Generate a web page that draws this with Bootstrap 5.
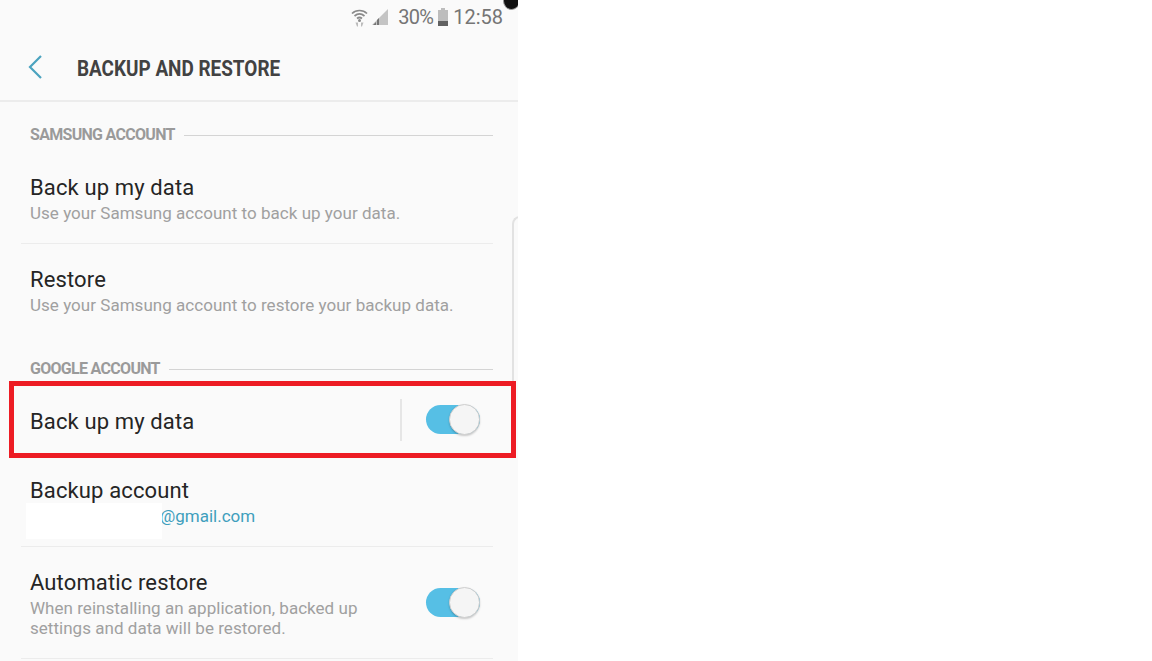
<!DOCTYPE html>
<html lang="en">
<head>
<meta charset="utf-8">
<title>Backup and restore</title>
<link rel="stylesheet" href="https://cdn.jsdelivr.net/npm/bootstrap@5.3.0/dist/css/bootstrap.min.css">
<style>
html,body{height:661px;overflow:hidden;background:#fff}
body{font-family:Roboto,"Liberation Sans",sans-serif}
.phone{width:518px;height:661px;background:#fafafa;overflow:hidden}
.status{height:33px;padding-right:15px;color:#757575;font-size:20px;line-height:30px}
.pct{letter-spacing:-.7px;margin:0 4px 0 9px}
.clock{margin-left:4px}
.wifi{margin-right:3px}
.corner{top:-8px;right:-2px;width:17px;height:18px;border-radius:50%;background:#111;border:1px solid #999}
.apphead{height:69px;border-bottom:2px solid #ececec;padding-left:27px}
.apphead h1{font-size:22px;font-weight:700;color:#424242;margin:4px 0 0 33px;line-height:30px;transform:scaleX(.86);transform-origin:left}
.listing{margin:0 25px 0 21px}
.sect{padding-left:9px;color:#9a9a9a;font-size:16px;font-weight:700;letter-spacing:-.7px;line-height:20px;gap:9px;margin-top:23px}
.sect i{flex:1;height:1px;background:#d4d4d4}
.entry{padding-left:9px;border-bottom:1px solid #ececec}
.entry.plain{border-bottom:0}
.ttl{font-size:22px;line-height:28px;color:#252525;letter-spacing:.13px}
.sub{font-size:17px;line-height:20px;color:#a0a0a0;letter-spacing:.03px}
.e1{height:99px;padding-top:29px}
.e2{height:92px;padding-top:22px;border-bottom:0}
.e3{height:76px;margin-top:3px;padding-top:0}
.e3 .ttl{margin-top:4px}
.e4{height:89px;padding-top:19px}
.e5{height:112px;padding-top:22px}
.e1 .sub,.e2 .sub,.e4 .sub,.e5 .sub{margin-top:1px}
.mail{color:#3f9fbd;padding-left:130px;letter-spacing:0}
.mask{left:26px;top:503px;width:136px;height:36px;background:#fff}
.redbox{left:9px;top:381px;width:507px;height:77px;border:5px solid #ed1c24}
.vsep{width:2px;height:42px;background:#e6e6e6;margin-right:24px}
.tog{width:54px;height:30px;margin-right:13px}
.tog b{display:block;width:54px;height:29px;border-radius:15px;background:#56bfe5}
.tog u{right:0;top:-1px;width:31px;height:31px;border-radius:50%;background:#f5f5f5;border:1px solid #cfcfcf;box-shadow:0 1px 2px rgba(0,0,0,.2)}
.e5 .tog{margin-top:19px}
.edge{left:512px;top:216px;width:10px;height:166px;border:2px solid #e2e2e2;border-radius:8px 0 0 0;border-right:0;border-bottom:0}
</style>
</head>
<body>
<div class="phone position-relative">
  <div class="status d-flex justify-content-end align-items-center">
    <svg class="wifi" width="17" height="20" viewBox="0 0 17 20" aria-hidden="true"><g fill="none" stroke="#8a8a8a" stroke-width="1.7"><path d="M1 6.500C5 2.500 12 2.500 16 6.500"/><path d="M3.500 9C6.500 6.500 10.500 6.500 13.500 9"/><path d="M6 11.500C7.500 10.300 9.500 10.300 11 11.500"/></g><circle cx="8.500" cy="13.500" r="1.500" fill="#8a8a8a"/><path d="M4.500 15.500h2.500v4h-1zM10 15.500h2.500l-1.500 4h-1z" fill="#bbb"/></svg>
    <svg width="18" height="19" viewBox="0 0 18 19" aria-hidden="true"><path d="M17 2v16H1z" fill="#c4c4c4"/><path d="M2 18l3-3v3zM6 18v-5l2-2v7z" fill="#757575"/></svg>
    <span class="pct">30%</span>
    <svg width="12" height="19" viewBox="0 0 12 19" aria-hidden="true"><path d="M4 1h4v2h3v16H1V3h3z" fill="#bdbdbd"/><path d="M1 14h10v5H1z" fill="#616161"/></svg>
    <span class="clock">12:58</span>
  </div>
  <div class="corner position-absolute"></div>
  <div class="apphead d-flex align-items-center">
    <svg width="17" height="26" viewBox="0 0 17 26" aria-hidden="true"><path d="M14 2L3 13l11 11" fill="none" stroke="#4ba3bf" stroke-width="2.200"/></svg>
    <h1>BACKUP AND RESTORE</h1>
  </div>
  <div class="listing">
    <div class="sect d-flex align-items-center"><span>SAMSUNG ACCOUNT</span><i></i></div>
    <div class="entry e1">
      <div class="ttl">Back up my data</div>
      <div class="sub">Use your Samsung account to back up your data.</div>
    </div>
    <div class="entry e2">
      <div class="ttl">Restore</div>
      <div class="sub">Use your Samsung account to restore your backup data.</div>
    </div>
    <div class="sect d-flex align-items-center"><span>GOOGLE ACCOUNT</span><i></i></div>
    <div class="entry e3 plain d-flex align-items-center">
      <div class="ttl flex-grow-1">Back up my data</div>
      <div class="vsep"></div>
      <div class="tog position-relative"><b></b><u class="position-absolute"></u></div>
    </div>
    <div class="entry e4">
      <div class="ttl">Backup account</div>
      <div class="sub mail">@gmail.com</div>
    </div>
    <div class="entry e5 d-flex">
      <div class="flex-grow-1">
        <div class="ttl">Automatic restore</div>
        <div class="sub">When reinstalling an application, backed up<br>settings and data will be restored.</div>
      </div>
      <div class="tog position-relative"><b></b><u class="position-absolute"></u></div>
    </div>
  </div>
  <div class="mask position-absolute"></div>
  <div class="edge position-absolute"></div>
  <div class="redbox position-absolute"></div>
</div>
<script src="https://cdn.jsdelivr.net/npm/bootstrap@5.3.0/dist/js/bootstrap.bundle.min.js"></script>
</body>
</html>
